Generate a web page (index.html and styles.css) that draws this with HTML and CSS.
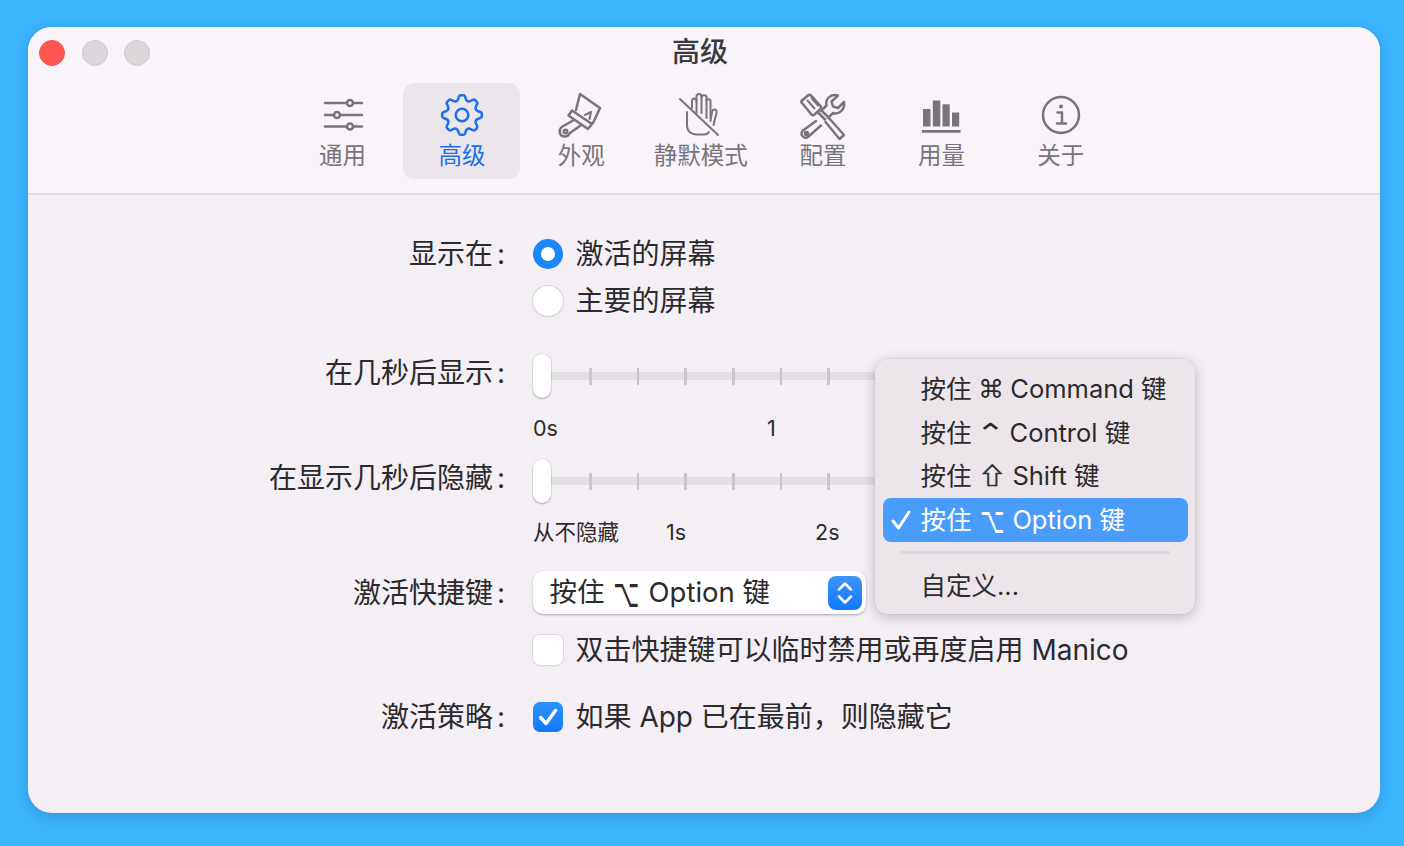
FILE: index.html
```html
<!DOCTYPE html>
<html lang="zh-CN">
<head>
<meta charset="utf-8">
<title>高级</title>
<link rel="stylesheet" href="styles.css">
</head>
<body>
<div class="window">
  <header class="head">
    <div class="titlebar">
      <div class="lights"><span class="light red"></span><span class="light"></span><span class="light"></span></div>
      <h1 class="title">高级</h1>
      <div></div>
    </div>
    <nav class="tabs">
      <div class="tab">
        <svg class="icon" viewBox="0 0 60 54"><g class="ln"><path d="M12 15H34M40 15H49M12 27H21M27 27H49M12 38.500H34M40 38.500H49"/><circle cx="37" cy="15" r="3"/><circle cx="24" cy="27" r="3"/><circle cx="37" cy="38.500" r="3"/></g></svg>
        <span class="tab-label">通用</span>
      </div>
      <div class="tab active">
        <svg class="icon" viewBox="0 0 60 54"><defs><path id="tooth" d="M-3.300-7.700Q-2.500-7.900-2.200-8.700L-1.700-10.200Q-1.400-11-.7-11H.7Q1.400-11 1.700-10.200L2.200-8.700Q2.500-7.900 3.300-7.700"/></defs><g class="ln gear" transform="translate(30 27) scale(1.800)"><use href="#tooth"/><use href="#tooth" transform="rotate(45)"/><use href="#tooth" transform="rotate(90)"/><use href="#tooth" transform="rotate(135)"/><use href="#tooth" transform="rotate(180)"/><use href="#tooth" transform="rotate(225)"/><use href="#tooth" transform="rotate(270)"/><use href="#tooth" transform="rotate(315)"/><circle r="3.500"/></g></svg>
        <span class="tab-label">高级</span>
      </div>
      <div class="tab">
        <svg class="icon" viewBox="0 0 60 54"><g class="ln"><path d="M25 22L29 6L49 20L42 35"/><path d="M34 27L40 24L38.500 31" class="thin"/><path d="M21 22.500L41 36L37 41L17.500 27.500Z"/><path d="M23 32L11.500 38.500C7 41.500 8 48.500 14 48.500C17 48.500 18 47 19 45L29.500 37.500"/><circle cx="14.500" cy="43.500" r="1.800"/></g></svg>
        <span class="tab-label">外观</span>
      </div>
      <div class="tab">
        <svg class="icon" viewBox="0 0 60 54"><g class="ln thin"><path d="M9 11L47 47"/><path d="M16 24V37C16 43 20 46.500 26 46.500H33C35 46.500 37 45.500 38 44"/><path d="M21 20V13C21 9.500 25.500 9.500 25.500 13V25"/><path d="M25.500 13V8.500C25.500 5 30.500 5 30.500 8.500V25"/><path d="M30.500 9.500C30.500 6.500 35.500 6.500 35.500 9.500V30"/><path d="M35.500 13C35.500 10.500 39.500 10.500 39.500 13V30"/><path d="M39.500 33L41 24C42 20 46.500 21 45.500 25L42.500 37"/></g></svg>
        <span class="tab-label">静默模式</span>
      </div>
      <div class="tab tab-shift">
        <svg class="icon" viewBox="0 0 60 54"><g class="ln"><path d="M9 12.500L15 7.500C16 6.700 17.300 6.800 18.200 7.700L27.500 18C28.400 19 28.300 20.300 27.300 21.200L21.500 26.500C20.500 27.300 19.200 27.200 18.300 26.300L9 15C8.300 14.300 8.300 13.200 9 12.500Z"/><path d="M14.500 12.500L21.500 20.500M18.500 10L25 17.500" class="thin"/><path d="M25.500 25L32 31.500"/><path d="M30 24L35.500 29.500L51 47L46.500 51L32.500 34"/><path d="M28 23L33.500 17.500C32 12 37 5 45 7.500L38.500 13.500L40 18.500L45 20L51 14C52.500 21 46 27 40 25L35 30"/><path d="M23 33L10 42.500C6 46 11 52.500 15.500 48.500L28 37.500"/><circle cx="13.500" cy="45.500" r="1.500"/></g></svg>
        <span class="tab-label">配置</span>
      </div>
      <div class="tab">
        <svg class="icon" viewBox="0 0 60 54"><g class="fill"><rect x="12" y="21" width="7.500" height="17.500"/><rect x="21.800" y="12.500" width="7.500" height="26"/><rect x="31.500" y="16.300" width="7.200" height="22.200"/><rect x="41" y="24.500" width="7.200" height="14"/><rect x="11" y="42" width="38.500" height="2.700"/></g></svg>
        <span class="tab-label">用量</span>
      </div>
      <div class="tab">
        <svg class="icon" viewBox="0 0 60 54"><g class="ln"><circle cx="30" cy="27" r="18"/><path d="M26.500 24.500H31V35M26 35.500H35"/></g><circle class="dot" cx="30" cy="18.500" r="2"/></svg>
        <span class="tab-label">关于</span>
      </div>
    </nav>
  </header>

  <main class="form">
    <div class="row radio-row">
      <div class="label">显示在<span class="colon">:</span></div>
      <div class="opt"><span class="radio on"></span><span>激活的屏幕</span></div>
    </div>
    <div class="row radio-row">
      <div></div>
      <div class="opt"><span class="radio"></span><span>主要的屏幕</span></div>
    </div>

    <div class="row slider-row first">
      <div class="label raised">在几秒后显示<span class="colon">:</span></div>
      <div class="slider">
        <div class="track"><i></i><i></i><i></i><i></i><i></i><i></i></div>
        <span class="thumb"></span>
      </div>
    </div>
    <div class="row scale-row">
      <div></div>
      <div class="scale scale-a"><span>0s</span><span>1</span></div>
    </div>

    <div class="row slider-row second">
      <div class="label raised">在显示几秒后隐藏<span class="colon">:</span></div>
      <div class="slider">
        <div class="track"><i></i><i></i><i></i><i></i><i></i><i></i></div>
        <span class="thumb"></span>
      </div>
    </div>
    <div class="row scale-row tight">
      <div></div>
      <div class="scale scale-b"><span>从不隐藏</span><span>1s</span><span class="far">2s</span></div>
    </div>

    <div class="row select-row">
      <div class="label">激活快捷键<span class="colon">:</span></div>
      <div class="select">
        <span class="select-text">按住 <span class="sym opt-key">⌥</span> Option 键</span>
        <span class="stepper"><svg viewBox="0 0 34 34"><path d="M11 13.500L17 7.500L23 13.500M11 20.500L17 26.500L23 20.500"/></svg></span>
      </div>
    </div>
    <div class="row check-row one">
      <div></div>
      <div class="opt"><span class="check"></span><span>双击快捷键可以临时禁用或再度启用 Manico</span></div>
    </div>
    <div class="row check-row two">
      <div class="label">激活策略<span class="colon">:</span></div>
      <div class="opt"><span class="check on"><svg viewBox="0 0 30 30"><path d="M7.500 15.500L13 21.500L22.500 8.500"/></svg></span><span>如果 App 已在最前，则隐藏它</span></div>
    </div>
  </main>

  <div class="menu">
    <div class="item">按住 <span class="sym cmd-key">⌘</span> Command 键</div>
    <div class="item">按住 <span class="sym ctrl-key">⌃</span> Control 键</div>
    <div class="item">按住 <span class="sym shift-key">⇧</span> Shift 键</div>
    <div class="item selected"><svg class="tick" viewBox="0 0 24 24"><path d="M4 13L9.500 20L20 4"/></svg>按住 <span class="sym opt-key">⌥</span> Option 键</div>
    <div class="sep"></div>
    <div class="item">自定义...</div>
  </div>
</div>
</body>
</html>
```
FILE: styles.css
```css
* { box-sizing: border-box; }
html, body { margin: 0; height: 100%; }
body {
  background: #3cb5ff;
  padding: 27px 24px 33px 28px;
  overflow: hidden;
  font-family: Inter, "Noto Sans CJK SC", "DejaVu Sans", sans-serif;
  color: #2b2a2c;
}
.window {
  position: relative;
  width: 1352px;
  height: 786px;
  border-radius: 24px;
  background: #f4eff4;
  box-shadow: 0 3px 14px rgba(0, 40, 90, .22);
  overflow: hidden;
}
.head {
  background: #f9f4f9;
  height: 168px;
  border-bottom: 2px solid #dfdbdf;
}
.titlebar {
  height: 52px;
  display: grid;
  grid-template-columns: 1fr auto 1fr;
  align-items: center;
  padding: 0 19px 0 11px;
}
.lights { display: flex; gap: 16.500px; }
.light {
  width: 26px;
  height: 26px;
  border-radius: 50%;
  background: #dad6da;
  border: 1px solid #cdc9cd;
}
.light.red { background: #ff5652; border-color: #f2504d; }
.title { margin: 0 0 2px; font-size: 28px; line-height: 36px; font-weight: 500; color: #3a393b; }
.tabs {
  display: flex;
  gap: 2.400px;
  padding: 4px 0 0 256px;
}
.tab {
  width: 117px;
  height: 96px;
  padding-top: 5px;
  border-radius: 11px;
  display: flex;
  flex-direction: column;
  align-items: center;
  color: #77757a;
}
.tab-shift { margin-left: 3px; margin-right: -1px; }
.tab.active { background: #ebe6eb; color: #1b6ff0; }
.icon { width: 60px; height: 54px; display: block; flex: none; }
.tab-label { font-size: 23.500px; line-height: 28px; }
.ln { fill: none; stroke: currentColor; stroke-width: 2.500; stroke-linecap: round; stroke-linejoin: round; }
.ln.thin, .thin { stroke-width: 2; }
.ln.gear { stroke-width: 1.400; }
.fill { fill: currentColor; }
.dot { fill: currentColor; }

.form { padding-top: 35px; }
.row {
  display: grid;
  grid-template-columns: 505px 1fr;
  font-size: 28px;
}
.label {
  text-align: right;
  padding-right: 28px;
  line-height: 36px;
  white-space: nowrap;
}
.colon { margin-left: 4px; }
.radio-row { height: 47px; align-items: center; }
.opt { display: flex; align-items: center; gap: 12.500px; white-space: nowrap; line-height: 36px; }
.radio {
  width: 30px;
  height: 30px;
  border-radius: 50%;
  background: #fff;
  box-shadow: 0 0 0 1px #d9d5d9, 0 1px 2px rgba(0, 0, 0, .12);
  flex: none;
}
.radio.on {
  background: #fff;
  border: 8.500px solid #1c86fb;
  box-shadow: none;
}
.slider-row { height: 44px; }
.slider-row.first { margin-top: 30px; }
.slider-row.second { margin-top: 16px; }
.raised { line-height: 38px; }
.slider { position: relative; display: flex; align-items: center; }
.track {
  width: 480px;
  height: 8px;
  background: #e4dfe4;
  display: flex;
  align-items: center;
  gap: 45.200px;
  padding-left: 56px;
}
.track i { width: 2.500px; height: 17px; background: #c9c5c9; flex: none; }
.thumb {
  position: absolute;
  left: 0;
  top: 0;
  width: 18px;
  height: 44px;
  border-radius: 9px;
  background: #fff;
  box-shadow: 0 1px 2px rgba(0, 0, 0, .3), 0 0 0 .5px rgba(0, 0, 0, .08);
}
.scale-row { height: 30px; margin-top: 15px; font-size: 21.500px; line-height: 30px; }
.scale-row.tight { margin-top: 14px; }
.scale { display: flex; white-space: nowrap; }
.scale-a { gap: 209px; }
.scale-b { gap: 47px; }
.scale-b .far { margin-left: 82px; }
.select-row { margin-top: 24px; height: 43px; align-items: center; }
.select {
  width: 333px;
  height: 43px;
  border-radius: 10px;
  background: #fff;
  box-shadow: 0 1px 2.500px rgba(0, 0, 0, .3);
  display: flex;
  align-items: center;
  justify-content: space-between;
  padding: 0 4px 0 16.500px;
}
.select-text { display: block; height: 36px; line-height: 34px; font-size: 27.500px; white-space: nowrap; }
.stepper {
  width: 34px;
  height: 34px;
  border-radius: 8px;
  background: linear-gradient(#3e94f8, #1079fb);
  display: block;
}
.stepper svg { display: block; width: 34px; height: 34px; }
.stepper path { fill: none; stroke: #fff; stroke-width: 2.500; stroke-linecap: round; stroke-linejoin: round; }
.check-row { height: 30px; align-items: center; }
.check-row.one { margin-top: 18px; }
.check-row.two { margin-top: 37px; }
.check {
  width: 30px;
  height: 30px;
  border-radius: 7px;
  background: #fff;
  box-shadow: 0 0 0 1px #dcd8dc, 0 1px 2px rgba(0, 0, 0, .1);
  flex: none;
}
.check.on { background: linear-gradient(#2f92fb, #1079fb); box-shadow: none; }
.check svg { display: block; width: 30px; height: 30px; }
.check path { fill: none; stroke: #fff; stroke-width: 3.500; stroke-linecap: round; stroke-linejoin: round; }

.menu {
  position: absolute;
  left: 847px;
  top: 332px;
  width: 320px;
  height: 255px;
  padding: 8px 7px 0 8px;
  border-radius: 13px;
  background: #ece6eb;
  box-shadow: 0 3px 14px rgba(0, 0, 0, .22), 0 0 0 .5px rgba(0, 0, 0, .06);
}
.item {
  height: 43.700px;
  line-height: 43.700px;
  padding-left: 37.500px;
  font-size: 25.500px;
  white-space: nowrap;
  border-radius: 8px;
  position: relative;
}
.item.selected { background: #4a9cfb; color: #fff; }
.tick { position: absolute; left: 6px; top: 10px; width: 24px; height: 24px; }
.tick path { fill: none; stroke: #fff; stroke-width: 3; stroke-linecap: round; stroke-linejoin: round; }
.sep { height: 3px; background: #dcd7dc; margin: 9px 18px 0 17px; }
.sep + .item { margin-top: 10px; }
.sym {
  display: inline-flex;
  justify-content: center;
  line-height: 0;
  font-family: "DejaVu Sans", sans-serif;
}
.opt-key { width: 1.040em; transform: scale(.82, 1.45); }
.cmd-key { width: .960em; }
.ctrl-key { width: .580em; margin: 0 .175em; transform: scale(1.4, 1.1); }
.shift-key { width: 1.040em; font-family: "Noto Sans CJK SC", "Noto Sans", "DejaVu Sans", sans-serif; -webkit-text-stroke: .7px currentColor; transform: scale(1.1, .9); }
```
